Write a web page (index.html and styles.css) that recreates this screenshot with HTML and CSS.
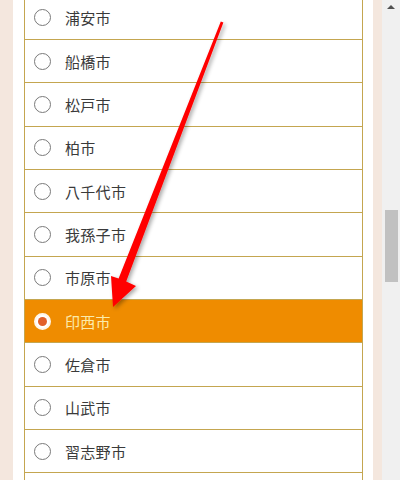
FILE: index.html
```html
<!DOCTYPE html>
<html lang="ja">
<head>
<meta charset="utf-8">
<link rel="stylesheet" href="styles.css">
</head>
<body>
<div class="screen">
  <div class="edge edge-left"></div>
  <div class="content">
    <ul class="list">
      <li class="row"><span class="radio"></span><span class="label">浦安市</span></li>
      <li class="row"><span class="radio"></span><span class="label">船橋市</span></li>
      <li class="row"><span class="radio"></span><span class="label">松戸市</span></li>
      <li class="row"><span class="radio"></span><span class="label">柏市</span></li>
      <li class="row"><span class="radio"></span><span class="label">八千代市</span></li>
      <li class="row"><span class="radio"></span><span class="label">我孫子市</span></li>
      <li class="row"><span class="radio"></span><span class="label">市原市</span></li>
      <li class="row selected"><span class="radio"></span><span class="label">印西市</span></li>
      <li class="row"><span class="radio"></span><span class="label">佐倉市</span></li>
      <li class="row"><span class="radio"></span><span class="label">山武市</span></li>
      <li class="row"><span class="radio"></span><span class="label">習志野市</span></li>
      <li class="row"></li>
    </ul>
  </div>
  <div class="edge edge-right"></div>
  <div class="scrollbar">
    <span class="scroll-up"></span>
    <span class="thumb"></span>
  </div>
  <svg class="arrow" width="400" height="480" viewBox="0 0 400 480">
    <defs>
      <filter id="sh" x="-20%" y="-20%" width="140%" height="140%">
        <feGaussianBlur in="SourceAlpha" stdDeviation="2"/>
        <feOffset dx="2" dy="2" result="b"/>
        <feComponentTransfer><feFuncA type="linear" slope="0.35"/></feComponentTransfer>
        <feMerge><feMergeNode/><feMergeNode in="SourceGraphic"/></feMerge>
      </filter>
    </defs>
    <polygon filter="url(#sh)" fill="#ff0000"
      points="223.4,22.5 126.2,281.5 136,286 113,307 111,276 118.6,278.6 220.8,21.5"/>
  </svg>
</div>
</body>
</html>
```
FILE: styles.css
```css
* { box-sizing: border-box; }
html, body { margin: 0; padding: 0; }
body {
  width: 400px;
  height: 480px;
  overflow: hidden;
  background: #ffffff;
  font-family: "Noto Sans CJK JP", "Noto Sans", sans-serif;
}
.screen {
  position: relative;
  display: flex;
  width: 400px;
  height: 480px;
  overflow: hidden;
}
.edge { background: #f4e7de; flex: none; }
.edge-left { width: 13px; }
.edge-right { width: 9px; }
.content {
  flex: 1;
  background: #ffffff;
  padding: 0 10px 0 11px;
  overflow: hidden;
}
.list {
  list-style: none;
  margin: -3.33px 0 0 0;
  padding: 0;
  border-left: 1px solid #c4a650;
  border-right: 1px solid #c4a650;
}
.row {
  height: 43.33px;
  border-bottom: 1px solid #c4a650;
  display: flex;
  align-items: center;
  padding-left: 9px;
  color: #3a3a3a;
  font-size: 15px;
}
.radio {
  width: 17px;
  height: 17px;
  border-radius: 50%;
  border: 1px solid #7a7a7a;
  background: #ffffff;
  flex: none;
  margin-right: 14px;
  display: flex;
  align-items: center;
  justify-content: center;
}
.label { letter-spacing: 0.3px; }
.row.selected {
  background: #ef8c00;
  color: #fcebaa;
}
.row.selected .radio {
  border: 2px solid #fff6ea;
  background: #ffffff;
}
.row.selected .radio::after {
  content: "";
  width: 9px;
  height: 9px;
  border-radius: 50%;
  background: #e2602a;
}
.scrollbar {
  width: 18px;
  flex: none;
  background: #f0f0f0;
  display: flex;
  flex-direction: column;
  align-items: center;
}
.scroll-up {
  margin-top: 5px;
  width: 0;
  height: 0;
  border-left: 4px solid transparent;
  border-right: 4px solid transparent;
  border-bottom: 4px solid #505050;
}
.thumb {
  margin-top: 201px;
  width: 13px;
  height: 72px;
  background: #c1c1c1;
}
.arrow {
  position: absolute;
  left: 0;
  top: 0;
  pointer-events: none;
}
```
